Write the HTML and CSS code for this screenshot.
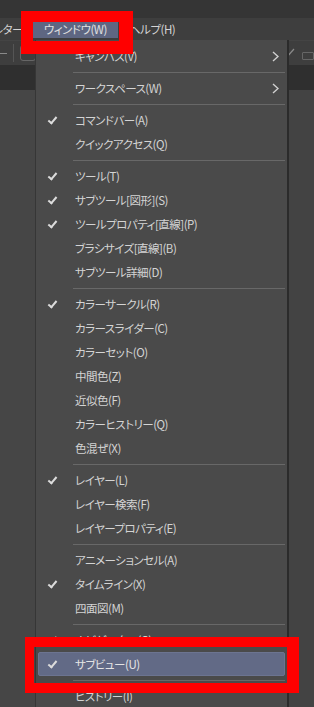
FILE: index.html
```html
<html lang="ja">

<head>
    <meta charset="UTF-8">
    <meta name="viewport" content="width=device-width, initial-scale=1.0">
    <title>ウィンドウメニュー</title>
    <link rel="stylesheet" href="styles.css">
</head>

<body>
    <div class="screen">
        <div class="title-bar"></div>

        <!-- Menu bar -->
        <div class="menu-bar">
            <span class="menu-title cut">フィルター(I)</span>
            <span class="menu-title active">ウィンドウ(W)</span>
            <span class="menu-title">ヘルプ(H)</span>
        </div>

        <!-- Tool bar -->
        <div class="tool-bar">
            <div class="tool-left">
                <span class="tool-dash"></span>
                <span class="tool-divider"></span>
                <span class="tool-box"></span>
            </div>
            <div class="tool-right">
                <svg width="12" height="12" viewBox="0 0 12 12">
                    <path d="M2 11 L10 2" stroke="#8a8a8a" stroke-width="1.2" fill="none" />
                </svg>
                <span class="tool-box small"></span>
            </div>
        </div>

        <div class="dark-band"></div>

        <div class="workspace">
            <div class="panel-left"></div>
            <div class="panel-right"></div>
        </div>

        <!-- Window dropdown -->
        <div class="dropdown">
            <div class="item"><span class="check"></span><span class="label">キャンバス(V)</span><span class="arrow"><svg width="7" height="11" viewBox="0 0 7 11"><path d="M1 1 L6 5.5 L1 10" stroke="#d0d0d0" stroke-width="1.4" fill="none" /></svg></span></div>
            <div class="sep"></div>
            <div class="item"><span class="check"></span><span class="label">ワークスペース(W)</span><span class="arrow"><svg width="7" height="11" viewBox="0 0 7 11"><path d="M1 1 L6 5.5 L1 10" stroke="#d0d0d0" stroke-width="1.4" fill="none" /></svg></span></div>
            <div class="sep"></div>
            <div class="item"><span class="check on"></span><span class="label">コマンドバー(A)</span></div>
            <div class="item"><span class="check"></span><span class="label">クイックアクセス(Q)</span></div>
            <div class="sep"></div>
            <div class="item"><span class="check on"></span><span class="label">ツール(T)</span></div>
            <div class="item"><span class="check on"></span><span class="label">サブツール[図形](S)</span></div>
            <div class="item"><span class="check on"></span><span class="label">ツールプロパティ[直線](P)</span></div>
            <div class="item"><span class="check"></span><span class="label">ブラシサイズ[直線](B)</span></div>
            <div class="item"><span class="check"></span><span class="label">サブツール詳細(D)</span></div>
            <div class="sep"></div>
            <div class="item"><span class="check on"></span><span class="label">カラーサークル(R)</span></div>
            <div class="item"><span class="check"></span><span class="label">カラースライダー(C)</span></div>
            <div class="item"><span class="check"></span><span class="label">カラーセット(O)</span></div>
            <div class="item"><span class="check"></span><span class="label">中間色(Z)</span></div>
            <div class="item"><span class="check"></span><span class="label">近似色(F)</span></div>
            <div class="item"><span class="check"></span><span class="label">カラーヒストリー(Q)</span></div>
            <div class="item"><span class="check"></span><span class="label">色混ぜ(X)</span></div>
            <div class="sep"></div>
            <div class="item"><span class="check on"></span><span class="label">レイヤー(L)</span></div>
            <div class="item"><span class="check"></span><span class="label">レイヤー検索(F)</span></div>
            <div class="item"><span class="check"></span><span class="label">レイヤープロパティ(E)</span></div>
            <div class="sep"></div>
            <div class="item"><span class="check"></span><span class="label">アニメーションセル(A)</span></div>
            <div class="item"><span class="check on"></span><span class="label">タイムライン(X)</span></div>
            <div class="item"><span class="check"></span><span class="label">四面図(M)</span></div>
            <div class="sep"></div>
            <div class="item"><span class="check on"></span><span class="label">ナビゲーター(G)</span></div>
            <div class="item selected"><span class="check on"></span><span class="label">サブビュー(U)</span></div>
            <div class="sep"></div>
            <div class="item"><span class="check"></span><span class="label">ヒストリー(I)</span></div>
        </div>

        <!-- Red callouts -->
        <div class="callout callout-menu"></div>
        <div class="callout callout-item"></div>
    </div>
</body>

</html>
```

FILE: styles.css
```css
/* General */
body {
    margin: 0;
    background-color: #464646;
    font-family: "Noto Sans CJK JP", "Noto Sans", sans-serif;
    font-size: 11.5px;
    letter-spacing: -0.5px;
    font-feature-settings: "palt";
    color: #d4d4d4;
}

.screen {
    position: relative;
    width: 314px;
    height: 707px;
    overflow: hidden;
    display: flex;
    flex-direction: column;
    background-color: #464646;
}

.title-bar {
    height: 18px;
    background-color: #353535;
}

/* Menu bar */
.menu-bar {
    height: 22px;
    display: flex;
    align-items: center;
    background-color: #3e3e3e;
    white-space: nowrap;
}

.menu-title {
    height: 18px;
    line-height: 18px;
    padding: 0 11px;
}

.menu-title.cut {
    margin-left: -25px;
    width: 58px;
    padding: 0;
    overflow: hidden;
}

.menu-title.active {
    width: 63px;
    background-color: #5e6682;
    color: #e0e0e0;
}

/* Tool bar */
.tool-bar {
    height: 24px;
    display: flex;
    justify-content: space-between;
    align-items: center;
    background-color: #3e3e3e;
    border-top: 1px solid #444;
}

.tool-left,
.tool-right {
    display: flex;
    align-items: center;
    gap: 6px;
}

.tool-dash {
    width: 7px;
    height: 1px;
    background-color: #8a8a8a;
}

.tool-divider {
    width: 1px;
    height: 18px;
    background-color: #555;
}

.tool-box {
    width: 14px;
    height: 14px;
    border: 1px solid #666;
    border-radius: 3px;
}

.tool-box.small {
    width: 10px;
    height: 6px;
    border-radius: 1px;
    margin-top: 6px;
}

.dark-band {
    height: 25px;
    background-color: #2f2f2f;
}

.workspace {
    flex: 1;
    display: flex;
}

.panel-left {
    flex: 1;
    background-color: #464646;
}

.panel-right {
    width: 27px;
    background-color: #434343;
}

/* Dropdown */
.dropdown {
    position: absolute;
    left: 35px;
    top: 40px;
    width: 247px;
    padding: 4px 2px 0 2px;
    background-color: #4a4a4a;
    border-left: 1px solid #363636;
    border-right: 2px solid #2b2b2b;
    bottom: 0;
}

.item {
    height: 24px;
    display: flex;
    align-items: center;
    white-space: nowrap;
    border-radius: 2px;
    box-sizing: border-box;
}

.item.selected {
    background-color: #626a86;
    border: 1px solid #6c7490;
    color: #e4e4e4;
}

.check {
    width: 37px;
    height: 24px;
    flex-shrink: 0;
    position: relative;
}

.check.on::after {
    content: "";
    position: absolute;
    left: 12px;
    top: 7px;
    width: 3px;
    height: 7px;
    border: solid #dcdcdc;
    border-width: 0 2px 2px 0;
    transform: rotate(40deg);
}

.item.selected .check {
    margin-left: -1px;
}

.label {
    flex: 1;
}

.arrow {
    display: flex;
    align-items: center;
    margin-right: 6px;
}

.sep {
    height: 8px;
    display: flex;
    align-items: center;
    padding-left: 35px;
}

.sep::before {
    content: "";
    flex: 1;
    height: 1px;
    background-color: #686868;
}

/* Red callouts */
.callout {
    position: absolute;
    border: solid #ff0000;
    box-sizing: border-box;
}

.callout-menu {
    left: 21px;
    top: 11px;
    width: 112px;
    height: 43px;
    border-width: 11px 14px 13px 12px;
}

.callout-item {
    left: 25px;
    top: 637px;
    width: 274px;
    height: 56px;
    border-width: 10px 12px 10px 9px;
}
```
